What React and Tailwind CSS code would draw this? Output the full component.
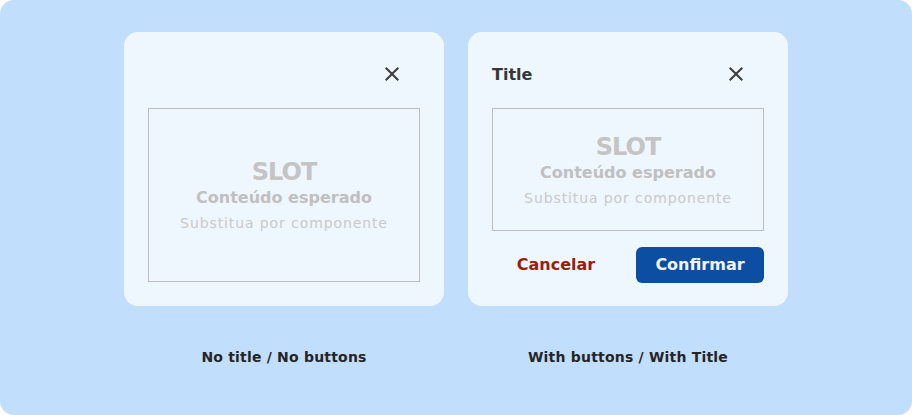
import React from "react";

function CloseIcon() {
  return (
    <svg width="24" height="24" viewBox="0 0 24 24" className="text-[#3c3c3c]">
      <path
        fill="currentColor"
        d="M19 6.41 17.59 5 12 10.59 6.41 5 5 6.41 10.59 12 5 17.59 6.41 19 12 13.41 17.59 19 19 17.59 13.41 12z"
      />
    </svg>
  );
}

function Slot({ tall }) {
  return (
    <div
      className={`flex flex-col items-center justify-center border border-[#bdbdbd] ${
        tall ? "h-[174px]" : "h-[123px]"
      }`}
    >
      <div className="text-[24px] leading-[30px] font-bold text-[#c4c4c4] tracking-[-1px]">SLOT</div>
      <div className="text-[16px] leading-[22px] font-bold text-[#c0c0c0]">
        Conteúdo esperado
      </div>
      <div className="mt-[4px] text-[14px] leading-[20px] text-[#c9c9c9] tracking-[0.9px]">
        Substitua por componente
      </div>
    </div>
  );
}

export default function App() {
  return (
    <div className="bg-white" style={{ fontFamily: "'DejaVu Sans', 'Noto Sans', sans-serif" }}>
      <div className="w-[912px] h-[415px] rounded-[14px] bg-[#c2defd] pt-[32px] flex justify-center gap-[24px]">
        <div className="flex flex-col items-center w-[320px]">
          <div className="w-[320px] h-[274px] rounded-[14px] bg-[#eef6fe] p-[24px] flex flex-col gap-[16px]">
            <div className="h-[36px] flex items-center justify-end pr-[16px]">
              <CloseIcon />
            </div>
            <Slot tall />
          </div>
          <div className="mt-[41px] text-[14px] leading-[20px] font-bold text-[#252525] tracking-[0.2px]">
            No title / No buttons
          </div>
        </div>
        <div className="flex flex-col items-center w-[320px]">
          <div className="w-[320px] h-[274px] rounded-[14px] bg-[#eef6fe] px-[24px] pt-[24px] pb-[23px] flex flex-col gap-[16px]">
            <div className="h-[36px] flex items-center justify-between pr-[16px]">
              <span className="text-[16px] font-bold text-[#363636] mt-[1px]">Title</span>
              <CloseIcon />
            </div>
            <Slot />
            <div className="flex gap-[16px]">
              <button className="w-[128px] h-[36px] rounded-[6px] text-[16px] font-bold text-[#9b1d0d]">
                Cancelar
              </button>
              <button className="w-[128px] h-[36px] rounded-[6px] bg-[#0b4ea2] text-[16px] font-bold text-[#f2f4f8]">
                Confirmar
              </button>
            </div>
          </div>
          <div className="mt-[41px] text-[14px] leading-[20px] font-bold text-[#252525] tracking-[0.2px]">
            With buttons / With Title
          </div>
        </div>
      </div>
    </div>
  );
}
